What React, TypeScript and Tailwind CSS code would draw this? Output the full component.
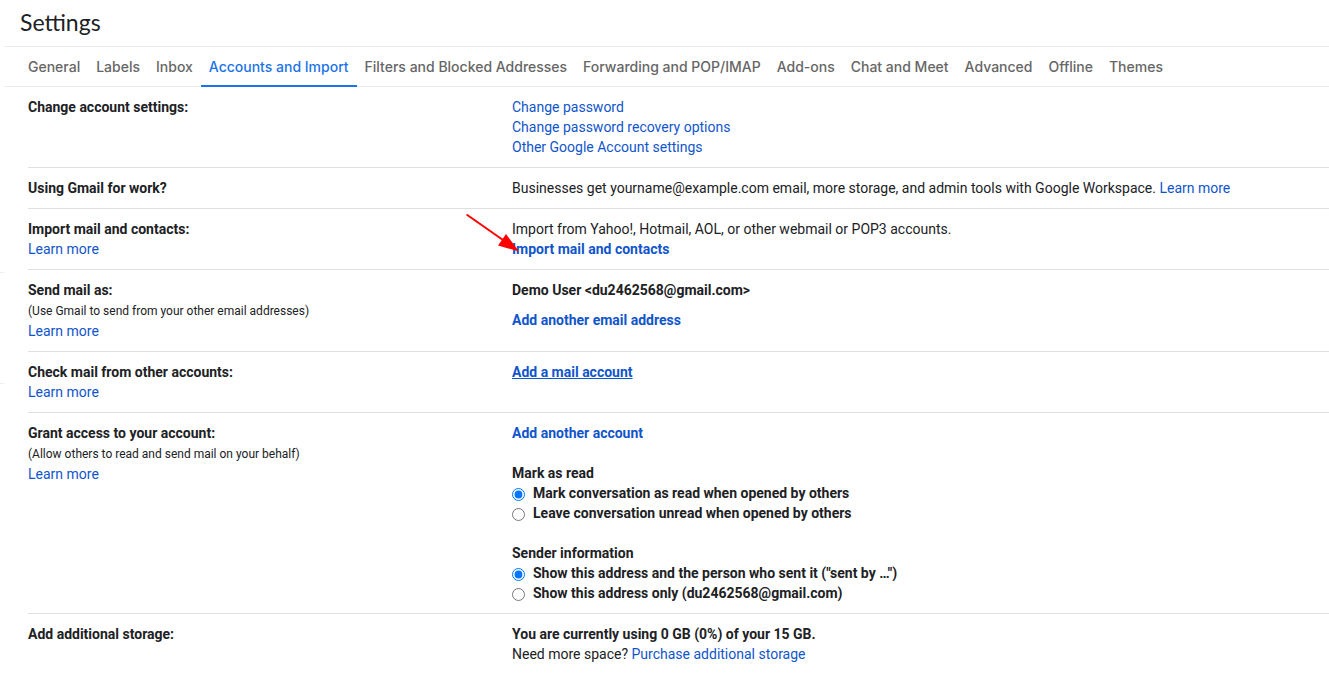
import type { ReactNode } from "react";

const tabs = [
  "General",
  "Labels",
  "Inbox",
  "Accounts and Import",
  "Filters and Blocked Addresses",
  "Forwarding and POP/IMAP",
  "Add-ons",
  "Chat and Meet",
  "Advanced",
  "Offline",
  "Themes",
];
const activeTab = "Accounts and Import";

function Link({ children, className = "" }: { children: ReactNode; className?: string }) {
  return (
    <a href="#" className={`text-[#1155cc] ${className}`}>
      {children}
    </a>
  );
}

function Row({
  title,
  note,
  learnMore = false,
  children,
}: {
  title: string;
  note?: string;
  learnMore?: boolean;
  children: ReactNode;
}) {
  return (
    <section className="grid grid-cols-[minmax(0,484px)_minmax(0,1fr)] border-b border-[#e0e0e0] py-2.5 last:border-b-0">
      <div className="flex flex-col items-start">
        <h2 className="font-bold">{title}</h2>
        {note && <p className="pt-px text-xs leading-5">{note}</p>}
        {learnMore && <Link>Learn more</Link>}
      </div>
      <div className="flex flex-col items-start">{children}</div>
    </section>
  );
}

function Choices({ legend, name, options }: { legend: string; name: string; options: string[] }) {
  return (
    <fieldset className="mt-5 font-bold">
      <legend>{legend}</legend>
      {options.map((option, i) => (
        <label key={option} className="flex items-center gap-2">
          <input type="radio" name={name} defaultChecked={i === 0} className="mt-0.5 size-[13px]" />
          {option}
        </label>
      ))}
    </fieldset>
  );
}

function Arrow() {
  return (
    <svg
      className="pointer-events-none absolute -top-[5px] -left-[46px]"
      width="54"
      height="38"
      viewBox="0 0 54 38"
      aria-hidden="true"
    >
      <path d="M.5 .5 37 26" stroke="#f00" strokeWidth="2" fill="none" />
      <path d="M40 20 53 37.500 32 31.500Z" fill="#f00" />
    </svg>
  );
}

export default function App() {
  return (
    <div className="relative min-h-screen bg-white pl-1 font-['Roboto',sans-serif] text-sm leading-5 text-[#202124]">
      <div className="absolute top-[272px] left-0 h-28 w-1 border-y border-[#eeeeee]" aria-hidden="true" />
      <header className="border-b border-[#ebebeb] px-4 pt-2 pb-2.5">
        <h1 className="font-['Lato',sans-serif] text-[23px] leading-7">Settings</h1>
      </header>
      <nav className="flex border-b border-[#ebebeb] pl-4 font-['Inter',sans-serif] font-medium">
        {tabs.map((tab) => (
          <a
            key={tab}
            href="#"
            aria-current={tab === activeTab ? "page" : undefined}
            className={
              tab === activeTab
                ? "-mb-px border-b-2 border-[#1a73e8] px-2 pt-2.5 pb-2 whitespace-nowrap text-[#1a73e8]"
                : "px-2 pt-2.5 pb-[9px] whitespace-nowrap text-[#666666]"
            }
          >
            {tab}
          </a>
        ))}
      </nav>
      <main className="pl-6">
        <Row title="Change account settings:">
          <Link>Change password</Link>
          <Link>Change password recovery options</Link>
          <Link>Other Google Account settings</Link>
        </Row>
        <Row title="Using Gmail for work?">
          <p>
            Businesses get yourname@example.com email, more storage, and admin tools with Google Workspace.{" "}
            <Link>Learn more</Link>
          </p>
        </Row>
        <Row title="Import mail and contacts:" learnMore>
          <div className="relative flex flex-col items-start">
            <p>Import from Yahoo!, Hotmail, AOL, or other webmail or POP3 accounts.</p>
            <Link className="font-bold">Import mail and contacts</Link>
            <Arrow />
          </div>
        </Row>
        <Row title="Send mail as:" note="(Use Gmail to send from your other email addresses)" learnMore>
          <p className="mb-2.5 font-bold">Demo User &lt;du2462568@gmail.com&gt;</p>
          <Link className="font-bold">Add another email address</Link>
        </Row>
        <Row title="Check mail from other accounts:" learnMore>
          <Link className="font-bold underline">Add a mail account</Link>
        </Row>
        <Row
          title="Grant access to your account:"
          note="(Allow others to read and send mail on your behalf)"
          learnMore
        >
          <Link className="font-bold">Add another account</Link>
          <Choices
            legend="Mark as read"
            name="read"
            options={["Mark conversation as read when opened by others", "Leave conversation unread when opened by others"]}
          />
          <Choices
            legend="Sender information"
            name="sender"
            options={[
              'Show this address and the person who sent it ("sent by …")',
              "Show this address only (du2462568@gmail.com)",
            ]}
          />
        </Row>
        <Row title="Add additional storage:">
          <p className="font-bold">You are currently using 0 GB (0%) of your 15 GB.</p>
          <p>
            Need more space? <Link>Purchase additional storage</Link>
          </p>
        </Row>
      </main>
    </div>
  );
}
